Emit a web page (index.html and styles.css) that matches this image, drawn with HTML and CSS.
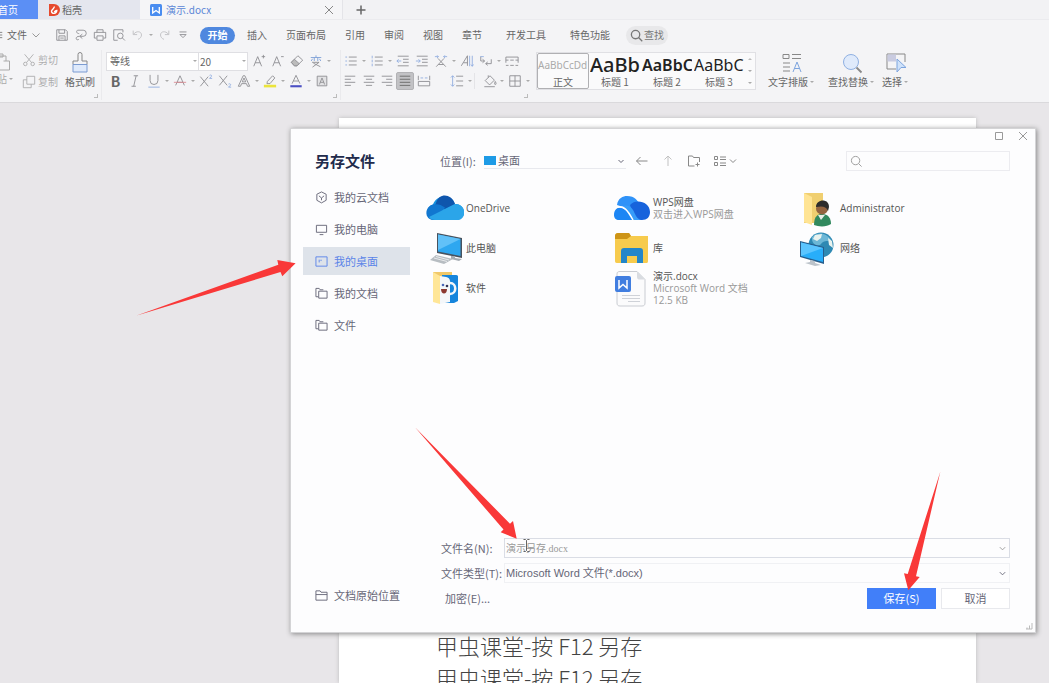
FILE: index.html
```html
<!DOCTYPE html>
<html lang="zh-CN">
<head>
<meta charset="utf-8">
<title>演示.docx</title>
<link rel="stylesheet" href="styles.css">
</head>
<body>
<header class="app-head">
  <nav class="tabs">
    <button class="tab tab-home"><span>首页</span></button>
    <button class="tab tab-shell">
      <svg class="i12" viewBox="0 0 12 12"><path d="M1 0h5a6 6 0 0 1 0 12H1z" fill="#e6492d"/><path d="M6.200 2.500c.5 2-2 2.500-2.700 4.500 0 3.500 5 3 5.300-.5-1 .2-1.800.7-2.600 1.500" fill="none" stroke="#fff" stroke-width="1.400"/></svg>
      稻壳</button>
    <button class="tab tab-doc">
      <svg class="i12" viewBox="0 0 12 12"><rect width="12" height="12" rx="1.500" fill="#4a8df0"/><path d="M2.700 3v6L6 6.500 9.300 9V3" fill="none" stroke="#fff" stroke-width="1.300"/></svg>
      <span>演示.docx</span>
      <svg class="i12 tab-close" viewBox="0 0 12 12"><path d="M2 2l8 8M10 2l-8 8"/></svg>
    </button>
    <button class="tab tab-add" aria-label="新建"><svg class="i12" viewBox="0 0 12 12"><path d="M6 1.500v9M1.500 6h9" stroke-width="1.500"/></svg></button>
  </nav>

  <nav class="menu">
    <button class="file-btn">
      <svg class="burger" viewBox="0 0 4 10"><path d="M0 1.500h3M0 5h3M0 8.500h3"/></svg>
      文件
      <svg class="i10" viewBox="0 0 10 10"><path d="M1.500 3.500L5 7l3.500-3.500"/></svg>
    </button>
    <div class="quick">
      <button class="cell" aria-label="保存"><svg viewBox="0 0 16 16"><path d="M2 2h10l2 2v10H2zM4.500 2v4h6.500V2M4.500 14V9h7v5M6 11.500h4"/></svg></button>
      <button class="cell" aria-label="输出"><svg viewBox="0 0 16 16"><path d="M4 2.500h6.500a3.500 3.500 0 0 1 0 7H7M9.500 7L6.500 9.500l3 2.500M4 2.500C2 4.500 3 6 6 6.500M6.500 9.500c-3 0-4 1-4 2.500s2 2 3 1"/></svg></button>
      <button class="cell" aria-label="打印"><svg viewBox="0 0 16 16"><path d="M4.500 5V2h7v3M4 11.500H1.500V5h13v6.500H12M4.500 9h7v5h-7z"/></svg></button>
      <button class="cell" aria-label="预览"><svg viewBox="0 0 16 16"><path d="M6.500 14H2V2h10.500v3"/><circle cx="9.500" cy="9" r="3.200"/><path d="M11.800 11.300l3 3"/></svg></button>
      <button class="cell faint" aria-label="撤销"><svg viewBox="0 0 16 16"><path d="M2.500 3v4.500H7M3 7c3-4 9-3.500 9 1 0 2-1.500 4-4 5"/></svg></button>
      <i class="caret"></i>
      <button class="cell faint" aria-label="恢复"><svg viewBox="0 0 16 16"><path d="M13.500 3v4.500H9M13 7C10 3 4 3.500 4 8c0 2 1.500 4 4 5"/></svg></button>
      <button class="cell" aria-label="自定义"><svg viewBox="0 0 16 16"><path d="M4 4.500h8M4.500 7.500L8 11l3.500-3.500z"/></svg></button>
    </div>
    <div class="menu-tabs">
      <button class="pill">开始</button>
      <button>插入</button><button>页面布局</button><button>引用</button><button>审阅</button><button>视图</button><button>章节</button>
      <button class="wide">开发工具</button><button class="wide">特色功能</button>
    </div>
    <button class="find"><svg viewBox="0 0 14 14"><circle cx="6" cy="6" r="4.500"/><path d="M9.200 9.200l4 4"/></svg>查找</button>
  </nav>

  <section class="ribbon">
    <div class="group clip-group">
      <button class="paste" aria-label="粘贴"><svg viewBox="0 0 12 20"><path d="M0 4h6v5M0 2h3v3H0M3.500 9h6v9H0" /></svg><span class="paste-row"><span>粘贴</span><i class="caret"></i></span></button>
      <div class="stack faint">
        <button class="label-btn"><svg viewBox="0 0 16 16"><path d="M3 1.500l8 9.500M13 1.500L5 11"/><circle cx="3.800" cy="12.500" r="2"/><circle cx="12.200" cy="12.500" r="2"/></svg>剪切</button>
        <button class="label-btn"><svg viewBox="0 0 16 16"><path d="M5.500 1.500h9v9h-9zM5.500 5.500h-4v9h9v-4"/></svg>复制</button>
      </div>
      <button class="big brush"><svg viewBox="0 0 22 22"><path d="M4 12.500V9h5V2.500a2 2 0 0 1 4 0V9h5v3.500"/><path d="M4 12.500h14V20H4z" fill="#dfeafb" stroke="#7b9bd1"/></svg><span>格式刷</span></button>
      <i class="corner"></i>
    </div>

    <div class="group font-group">
      <div class="line">
        <div class="combo"><input class="font-name" aria-label="字体" value="等线"><i class="caret"></i><input class="font-size" aria-label="字号" value="20"><i class="caret"></i></div>
        <button class="cell" aria-label="增大字号"><svg viewBox="0 0 16 16"><path d="M2 14L6.500 3 11 14M3.700 10h5.600M11 3h4M13 1v4"/></svg></button>
        <button class="cell" aria-label="减小字号"><svg viewBox="0 0 16 16"><path d="M2 14L6.500 3 11 14M3.700 10h5.600M11.500 3h3"/></svg></button>
        <button class="cell" aria-label="清除格式"><svg viewBox="0 0 16 16"><path d="M1.500 9.500L9 2l5.500 5L8 13.500H5z"/><path d="M5 6l5.500 5L8 13.500H5L1.500 9.500z" fill="#bbb"/></svg></button>
        <button class="cell" aria-label="拼音"><svg viewBox="0 0 16 16"><path d="M2 4h12M8 1.500V4M6 4v4M10 4v4M4 5.500L2.500 8M12 5.500L13.500 8" stroke="#7d9fd6"/><path d="M3.500 9.500h8L4 15M5 10.500l8 4"/></svg></button>
        <i class="caret"></i>
      </div>
      <div class="line">
        <button class="cell glyph bold">B</button>
        <button class="cell" aria-label="倾斜"><svg viewBox="0 0 16 16"><path d="M6.500 2h5M4 14h5M9.300 2L6.500 14"/></svg></button>
        <button class="cell" aria-label="下划线"><svg viewBox="0 0 16 16"><path d="M3.500 1v6.500a4.500 4.500 0 0 0 9 0V1"/><path d="M1.500 15h13" class="blue"/></svg></button><i class="caret"></i>
        <button class="cell" aria-label="删除线"><svg viewBox="0 0 16 16"><path d="M3 13L8 2l5 11M4.500 9.500h7"/><path d="M1 9.500h14" stroke="#dc8b92"/></svg></button><i class="caret"></i>
        <button class="cell" aria-label="上标"><svg viewBox="0 0 16 16"><path d="M1.500 3l9 11M10.500 3l-9 11"/><path d="M12 1.500c2-1 3 .5 2 1.500l-2 2h3" class="blue"/></svg></button>
        <button class="cell" aria-label="下标"><svg viewBox="0 0 16 16"><path d="M1.500 2l9 11M10.500 2l-9 11"/><path d="M12 11.500c2-1 3 .5 2 1.500l-2 2h3" class="blue"/></svg></button>
        <button class="cell" aria-label="文字效果"><svg viewBox="0 0 16 16"><path d="M1.500 14L7 2h2l5.500 12H12l-1.200-3H5.200L4 14zM6 9h4L8 4.500z"/></svg></button><i class="caret"></i>
        <button class="cell" aria-label="突出显示"><svg viewBox="0 0 16 16"><path d="M5 8.500L11 2l2.500 2.500L8 11H4.500z"/><path d="M1 13.800h14" stroke="#ebe43c" stroke-width="3"/></svg></button><i class="caret"></i>
        <button class="cell" aria-label="字体颜色"><svg viewBox="0 0 16 16"><path d="M3.500 11L8 1.500l4.500 9.500M5 8h6"/><path d="M1.500 14h13" stroke="#4b4fc4" stroke-width="2.400"/></svg></button><i class="caret"></i>
        <button class="cell" aria-label="字符底纹"><svg viewBox="0 0 16 16"><path d="M2.500 2.500h11v11h-11z" fill="#e2e2e4"/><path d="M5 12L8 4.500l3 7.500M6 9.500h4"/></svg></button>
      </div>
      <i class="corner"></i>
    </div>

    <div class="group para-group">
      <div class="line">
        <button class="cell" aria-label="项目符号"><svg viewBox="0 0 16 16"><path d="M5.500 3.500h9M5.500 8h9M5.500 12.500h9"/><path d="M1.500 3.500h2M1.500 8h2M1.500 12.500h2" class="blue"/></svg></button><i class="caret"></i>
        <button class="cell" aria-label="编号"><svg viewBox="0 0 16 16"><path d="M5.500 3.500h9M5.500 8h9M5.500 12.500h9"/><path d="M2.500 2v3M2.500 6.500v3M2.500 11v3" class="blue"/></svg></button><i class="caret"></i>
        <button class="cell" aria-label="减少缩进"><svg viewBox="0 0 16 16"><path d="M2 2.500h12.500M8 6h6.500M8 9.500h6.500M2 13.500h12.500"/><path d="M1 8h5M3 6L1 8l2 2" class="blue"/></svg></button>
        <button class="cell" aria-label="增加缩进"><svg viewBox="0 0 16 16"><path d="M2 2.500h12.500M8 6h6.500M8 9.500h6.500M2 13.500h12.500"/><path d="M1 8h5M4 6l2 2-2 2" class="blue"/></svg></button>
        <button class="cell" aria-label="中文版式"><svg viewBox="0 0 16 16"><path d="M2.500 14.500L11.500 5M13.500 14.500L4.500 5M5 12h6"/><path d="M1 3h4M11 3h4M3.500 1.500L5 3 3.500 4.500M12.500 1.500L11 3l1.500 1.500" class="blue"/></svg></button><i class="caret"></i>
        <button class="cell" aria-label="排序"><svg viewBox="0 0 16 16"><path d="M1.500 13.500L8.500 2v11.500M4 10h4.500"/><path d="M11 2v12M14 2v12M12.500 12l1.500 2 1.500-2" class="blue"/></svg></button>
        <button class="cell" aria-label="换行"><svg viewBox="0 0 16 16"><path d="M2 3v5h4M4 6l2.500 2L4 10M14 6v5H8M10 9l-2.500 2 2.500 2"/><path d="M1.500 3h4" class="blue"/></svg></button><i class="caret"></i>
        <button class="cell" aria-label="制表位"><svg viewBox="0 0 16 16"><path d="M1 10V3.500h14V10M1 7h3M6 7h4M12 7h3M1 13h3M6 13h4M12 13h3"/></svg></button>
      </div>
      <div class="line">
        <button class="cell" aria-label="左对齐"><svg viewBox="0 0 16 16"><path d="M2 2.500h12M2 6h7M2 9.500h12M2 13h7"/></svg></button>
        <button class="cell" aria-label="居中"><svg viewBox="0 0 16 16"><path d="M2 2.500h12M4.500 6h7M2 9.500h12M4.500 13h7"/></svg></button>
        <button class="cell" aria-label="右对齐"><svg viewBox="0 0 16 16"><path d="M2 2.500h12M7 6h7M2 9.500h12M7 13h7"/></svg></button>
        <button class="cell active" aria-label="两端对齐"><svg viewBox="0 0 16 16"><path d="M2 2.500h12M2 6h12M2 9.500h12M2 13h12"/></svg></button>
        <button class="cell" aria-label="分散对齐"><svg viewBox="0 0 16 16"><path d="M1.500 2v5M14.500 2v5M1.500 8.500h13v5h-13z"/><path d="M4 4.500h3M9 4.500h3" class="blue"/></svg></button>
        <i class="gap"></i>
        <button class="cell" aria-label="行距"><svg viewBox="0 0 16 16"><path d="M7 2.500h8M7 8h8M7 13.500h8"/><path d="M3 2v12M1 4l2-2 2 2M1 12l2 2 2-2" class="blue"/></svg></button><i class="caret"></i>
        <i class="rule"></i>
        <button class="cell" aria-label="底纹"><svg viewBox="0 0 16 16"><path d="M2.500 7.500L8 2l5 5-5.500 5.500zM6 4V1.500M14 8.500c1.500 2.500 1 3.500 0 3.500s-1-1.500 0-3.500M1.500 14.500h12"/></svg></button><i class="caret"></i>
        <button class="cell" aria-label="边框"><svg viewBox="0 0 16 16"><path d="M2 2h12v12H2zM8 2v12M2 8h12"/></svg></button><i class="caret"></i>
      </div>
      <i class="corner"></i>
    </div>

    <div class="styles">
      <button class="style on"><span class="sample s0">AaBbCcDd</span><span>正文</span></button>
      <button class="style"><span class="sample s1">AaBb</span><span>标题 1</span></button>
      <button class="style"><span class="sample s2">AaBbC</span><span>标题 2</span></button>
      <button class="style"><span class="sample s3">AaBbC</span><span>标题 3</span></button>
      <div class="style-scroll"><i class="caret up"></i><i class="caret"></i><i class="caret"></i></div>
    </div>

    <button class="big layout-btn"><svg viewBox="0 0 22 22"><path d="M2 2.500h6v4H2zM11 2.500h9M11 6.500h9M2 11h7M2 15h7M2 19h7"/><path d="M12 20l4-10 4 10M13.500 16.500h5" stroke="#7da4de"/></svg><span>文字排版<i class="caret"></i></span></button>
    <button class="big"><svg viewBox="0 0 22 22"><circle cx="10" cy="10" r="7.500" fill="#dfeafb" stroke="#8fb0e2"/><path d="M15.500 15.500L20.500 20.500" stroke-width="1.800"/></svg><span>查找替换<i class="caret"></i></span></button>
    <button class="big select-btn"><svg viewBox="0 0 22 22"><path d="M11 17H2V2h18v8"/><path d="M2.500 2.500h8.500v7h-8.500z" fill="#c9cbe0" stroke="none"/><path d="M12 7v13l4-4.500h5z" fill="#cfe2fa" stroke="#7da4de"/></svg><span>选择<i class="caret"></i></span></button>
  </section>
</header>

<main class="workspace">
  <article class="paper">
    <p>甲虫课堂-按 F12 另存</p>
    <p>甲虫课堂-按 F12 另存</p>
  </article>

  <section class="dialog" role="dialog" aria-label="另存文件">
    <div class="titlebar">
      <button aria-label="最大化"><svg viewBox="0 0 10 10"><path d="M1.500 1.500h7v7h-7z"/></svg></button>
      <button aria-label="关闭"><svg viewBox="0 0 10 10"><path d="M1 1l8 8M9 1L1 9"/></svg></button>
    </div>

    <aside class="side">
      <h1>另存文件</h1>
      <button><svg viewBox="0 0 14 14"><path d="M7 1l5 2.500v6.500L7 12.800 2 10V3.500z"/><path d="M4.200 5.200L7 7.500l2.800-2.300M7 7.500v2.500"/></svg>我的云文档</button>
      <button><svg viewBox="0 0 14 14"><path d="M1.500 2.500h11v7.500h-11zM5 12.500h4"/></svg>我的电脑</button>
      <button class="current"><svg viewBox="0 0 14 14"><path d="M1 2h12v10H1zM4.500 5v3M6.500 5v1.500"/></svg>我的桌面</button>
      <button><svg viewBox="0 0 14 14"><path d="M3.500 10.500H1v-9h3.500l1 1.500H9M4 4.500h9v7.500H4z"/></svg>我的文档</button>
      <button><svg viewBox="0 0 14 14"><path d="M3.500 10.500H1v-9h3.500l1 1.500H9M4 4.500h9v7.500H4z"/></svg>文件</button>
      <button class="origin"><svg viewBox="0 0 14 14"><path d="M1 12V2h4.500l1 1.500H13V12zM1 6h12"/></svg>文档原始位置</button>
    </aside>

    <div class="main">
      <div class="location">
        <label for="loc">位置(I):</label>
        <div class="loc-field"><i class="desk"></i><select id="loc"><option>桌面</option></select><svg viewBox="0 0 10 10"><path d="M2.500 4L5 6.500 7.500 4"/></svg></div>
        <button aria-label="后退"><svg viewBox="0 0 14 14"><path d="M12.500 7h-11M5.500 3L1.500 7l4 4"/></svg></button>
        <button class="faint" aria-label="上一级"><svg viewBox="0 0 14 14"><path d="M7 12V2M3.500 5.500L7 2l3.500 3.500"/></svg></button>
        <button aria-label="新建文件夹"><svg viewBox="0 0 14 14"><path d="M7.500 12h-6V2h4l1 1.500h6V8M10.500 8.500v4M8.500 10.500h4"/></svg></button>
        <button class="view-btn" aria-label="视图"><svg viewBox="0 0 24 14"><path d="M1.500 2.500h3v3h-3zM1.500 8.500h3v3h-3zM7 3h6M7 5.500h6M7 9h6M7 11.500h6M17 5.500L20 8.500l3-3"/></svg></button>
        <label class="search"><svg viewBox="0 0 14 14"><circle cx="6" cy="6" r="4.500"/><path d="M9.300 9.300l3.200 3.200"/></svg><input type="search" aria-label="搜索"></label>
      </div>

      <ul class="files">
        <li><svg class="pic" viewBox="0 0 38 38"><path d="M8 31a8 8 0 0 1-1-15.500C9 9 19 3 27 11l2 4a8 8 0 0 1 2 16z" fill="#1490df"/><path d="M10 14C13 4 25 4 29 15l-10 5-10-4z" fill="#0f56ad"/><path d="M7 15.500c4-1 8 0 12 3L8 31c-10 0-10-13-1-15.500z" fill="#1177d0"/><path d="M19 20l10-5c12 0 12 16 2 16H9c-3 0-5-1-6-3z" fill="#2ba5e9"/></svg><p>OneDrive</p></li>
        <li><svg class="pic" viewBox="0 0 38 38"><path d="M4 16C5 9 10 7 14 7c8 0 11 5 13 9l-4 14-7-10z" fill="#2f92f8"/><path d="M17 16c6-7 20-3 20 7 0 5-3 8-8 8H18c4-3 0-12-1-15z" fill="#1763dc"/><path d="M10 17c7-2 10 3 12 8 2 4 4 6 8 6H16c-4-4-2-10-6-14z" fill="#379cf9"/><path d="M1 26c0-9 9-10 13-3l5 8H6c-3 0-5-2-5-5z" fill="#1d86f4"/><path d="M2 19c9-4 13 3 18 12" fill="none" stroke="#fff" stroke-width="1.500"/></svg><div><p>WPS网盘</p><p class="sub">双击进入WPS网盘</p></div></li>
        <li><svg class="pic" viewBox="0 0 38 38"><path d="M4 4h19v30H4z" fill="#f0cf70"/><path d="M4 4l8 4v28l-8-3z" fill="#ffe494"/><path d="M14 36c0-9 4-11 8-11 6 0 9 4 9 10-4 3-12 3-17 1z" fill="#31895e"/><path d="M18 26l3 5 4-5z" fill="#e8eee8"/><circle cx="22" cy="19.500" r="6" fill="#936440"/><path d="M16 18c0-8 13-9 13 0l-1 4c-2-5-6-5-12-4z" fill="#2c2c2c"/></svg><p>Administrator</p></li>
        <li><svg class="pic" viewBox="0 0 38 38"><path d="M11 4l25 5v20l-25-5z" fill="#48525e"/><path d="M12 5.500l22.500 4.500v17L12 22.500z" fill="#2ea7f0"/><path d="M12 5.500l22.500 4.500L12 21z" fill="#61c1f8"/><path d="M25 27v3l8 2 3-2-7-1v-2z" fill="#a5acb3"/><path d="M10 26l17 4-9 5-14-4z" fill="#b7bdc2"/><path d="M8 29l13 3.500M10 27.500l13 3.500" stroke="#e8eaec" stroke-width="1"/></svg><p>此电脑</p></li>
        <li><svg class="pic" viewBox="0 0 38 38"><path d="M2 8c0-3 1-4 3-4h11l2 3h17v25c0 2-1 2-2 2H4c-2 0-2-1-2-3z" fill="#f7cb4d"/><path d="M2 10h12l4-3-2-3H5C3 4 2 5 2 7z" fill="#cd9417"/><path d="M8 34V22c0-2 1-3 3-3h16c2 0 3 1 3 3v12h-6v-7H14v7z" fill="#2386c9"/></svg><p>库</p></li>
        <li><svg class="pic" viewBox="0 0 38 38"><circle cx="21" cy="16" r="12.500" fill="#2e89b3"/><path d="M12 8c6-6 15-4 19 3-5 2-7 0-10 4-4 4-10-1-9-7z" fill="#6cb7d6"/><path d="M15 6l7-1-1 4-4 3-4-2zM28 9l4 3 1 7-4-3z" fill="#e9f2ee"/><path d="M0 12l24 6v17L0 28z" fill="#285e8c"/><path d="M1 13.500L23 19v14L1 27z" fill="#28aefa"/><path d="M1 13.500L23 19 1 27z" fill="#5bc5ff"/><path d="M10 31v2l-5 1 10 3 6-1-6-2v-2z" fill="#bcc3ca"/></svg><p>网络</p></li>
        <li><svg class="pic" viewBox="0 0 38 38"><path d="M7 3h19v30H7z" fill="#f0c869"/><path d="M16 6h14c2 0 2 1 2 2v24l-4 2H16z" fill="#1685dc"/><path d="M7 3l7 4v28l-7-2z" fill="#ffe697"/><path d="M14 7c3 1 10 0 10 5v21l-10 2z" fill="#f4f7fa"/><path d="M24 14c7 0 7 11 0 11" fill="none" stroke="#f4f7fa" stroke-width="2.500"/><circle cx="17" cy="16" r="1.300" fill="#4a66b8"/><circle cx="21" cy="17" r="1.300" fill="#335"/><path d="M15 20h6c0 6-6 6-6 0z" fill="#8c3931"/></svg><p>软件</p></li>
        <li><svg class="pic" viewBox="0 0 38 38"><path d="M4 5c0-2 1-2.500 3-2.500h17l8 8V34c0 2-1 3-3 3H7c-2 0-3-1-3-3z" fill="#fbfbfc" stroke="#c9ccd2"/><path d="M24 2.500V8c0 2 1 2.500 3 2.500h5z" fill="#d9dce1"/><path d="M9 26.500h18M9 29.500h18M15 32.500h12" stroke="#cfd2d8"/><rect x="2" y="7" width="16" height="16" rx="2" fill="#417ee0"/><path d="M6 11v8l4-3.500 4 3.500v-8" fill="none" stroke="#fff" stroke-width="1.500"/></svg><div><p>演示.docx</p><p class="sub">Microsoft Word 文档</p><p class="sub">12.5 KB</p></div></li>
      </ul>

      <form class="form" onsubmit="return false">
        <label for="fname">文件名(N):</label>
        <div class="field name-field"><input id="fname" value="演示另存.docx"><svg viewBox="0 0 10 10"><path d="M2 3.500l3 3 3-3"/></svg></div>
        <label for="ftype">文件类型(T):</label>
        <div class="field"><select id="ftype"><option>Microsoft Word 文件(*.docx)</option></select><svg viewBox="0 0 10 10"><path d="M2 3.500l3 3 3-3"/></svg></div>
        <div class="actions"><button class="encrypt">加密(E)...</button><button class="save">保存(S)</button><button class="cancel">取消</button></div>
      </form>
    </div>
    <svg class="grip" viewBox="0 0 8 8"><path d="M7 1v6M4.500 3.500V7M2 5.500V7M1 7h6"/></svg>
  </section>
</main>

<svg class="marks" viewBox="0 0 1049 683" aria-hidden="true">
  <path d="M136 315.700L278.300 264.700 277.300 260 295.600 263.300 282.300 276.300 280.500 272z"/>
  <path d="M415 427.300L510 523.700 513 521 516.700 538.700 500.700 532.300 503.500 529.500z"/>
  <path d="M940.300 471.700L916 576.300 919.700 577 908.300 590.300 904 573.300 907.700 574z"/>
  <path class="ibeam" d="M523.500 539.500h2l1 1 1-1h2M526.500 540.500v10M523.500 551.500h2l1-1 1 1h2"/>
</svg>
</body>
</html>
```
FILE: styles.css
```css
* { box-sizing: border-box; }
body {
  margin: 0;
  height: 100vh;
  display: flex;
  flex-direction: column;
  overflow: hidden;
  background: #e8e6e9;
  color: #666;
  font: 10px/12px "Noto Sans CJK SC", sans-serif;
}
button, input, select {
  font: inherit;
  color: inherit;
  background: none;
  border: 0;
  padding: 0;
  margin: 0;
  outline: 0;
  appearance: none;
  white-space: nowrap;
}
input, select { min-width: 0; }
svg { fill: none; stroke: currentColor; flex: none; display: block; }
.pic, .tab svg { stroke: none; }
p, h1, ul { margin: 0; padding: 0; }
.faint { opacity: .5; }
.blue { stroke: #8fabdf; }
.i12 { width: 12px; height: 12px; }
.i10 { width: 10px; height: 10px; }

.app-head { flex: none; background: #f4f4f6; border-bottom: 1px solid #dad9dc; }

/* document tabs */
.tabs { display: flex; height: 20px; background: #f2f2f4; border-bottom: 1px solid #ebebee; }
.tab { display: flex; align-items: center; gap: 2px; height: 19px; }
.tab-home { width: 38px; justify-content: flex-end; padding-right: 20px; background: #5b8ff5; color: #fff; overflow: hidden; }
.tab-shell { width: 102px; padding-left: 10px; background: #e4e6ee; }
.tab-doc { width: 203px; gap: 4px; padding: 0 7px 0 10px; background: #f5f5f7; color: #5b86d6; border-right: 1px solid #e4e4e8; }
.tab .tab-close { margin-left: auto; stroke: #888; }
.tab-add { padding-left: 12px; }
.tab-add svg.i12 { stroke: #666; }

/* menu row */
.menu { display: flex; align-items: center; height: 30px; }
.file-btn { display: flex; align-items: center; gap: 4px; width: 52px; }
.file-btn .i10 { color: #999; }
.burger { width: 3px; height: 10px; }
.quick { display: flex; align-items: center; width: 148px; }
.cell { width: 19px; height: 18px; display: flex; align-items: center; justify-content: center; color: #8c8c90; }
.cell svg { width: 14px; height: 14px; }
.caret { width: 7px; flex: none; display: flex; justify-content: center; }
.caret::before { content: ""; border: 2px solid transparent; border-top-color: #aaa; border-bottom: 0; }
.caret.up::before { border: 2px solid transparent; border-bottom-color: #bbb; border-top: 0; }
.menu-tabs { display: flex; align-items: center; gap: 19px; margin-right: 16px; }
.menu-tabs .wide { margin-left: 5px; }
.menu-tabs .pill { width: 35px; height: 17px; border-radius: 9px; background: #4f88df; color: #fff; font-weight: 700; margin-right: -7px; }
.find { display: flex; align-items: center; gap: 1px; height: 19px; padding: 0 4px; border-radius: 10px; background: #e8e8ea; color: #777; }
.find svg { width: 13px; height: 13px; stroke-width: 1.4; }

/* ribbon */
.ribbon { display: flex; height: 52px; align-items: flex-start; }
.group { position: relative; flex: none; height: 50px; border-right: 1px solid #eaeaed; }
.corner { position: absolute; right: 3px; bottom: 2px; width: 4px; height: 4px; border: solid #bbb; border-width: 0 1px 1px 0; }
.line { display: flex; align-items: center; height: 20px; }
.clip-group { display: flex; width: 102px; }
.paste { width: 16px; display: flex; flex-direction: column; gap: 1px; color: #aaa; overflow: hidden; padding-top: 2px; }
.paste svg { width: 12px; height: 20px; }
.paste-row { width: 14px; display: flex; justify-content: flex-end; align-items: center; }
.stack { width: 49px; padding-left: 6px; display: flex; flex-direction: column; gap: 2px; }
.label-btn { height: 20px; display: flex; align-items: center; gap: 2px; }
.label-btn svg { width: 14px; height: 14px; }
.big { flex: none; display: flex; flex-direction: column; align-items: center; gap: 2px; padding-top: 2px; }
.big svg { width: 22px; height: 22px; color: #888; }
.big span { display: flex; align-items: center; }
.font-group { width: 239px; padding: 1px 0 0 4px; }
.combo { display: flex; align-items: center; width: 142px; height: 19px; margin-right: 1px; background: #fff; border: 1px solid #dfdfe3; }
.font-name { flex: 1; padding-left: 3px; }
.font-size { width: 42px; height: 17px; padding-left: 1px; border-left: 1px solid #dfdfe3; }
.glyph { font-size: 14px; color: #666; }
.bold { font-weight: 700; }
.para-group { width: 190px; padding: 1px 0 0; border: 0; }
.active { background: #c2c2c5; border: 1px solid #b2b2b5; border-radius: 2px; color: #666; }
.gap { width: 16px; }
.rule { width: 7px; height: 16px; border-left: 1px solid #e4e4e7; }
.styles { flex: none; display: flex; width: 220px; height: 38px; margin: 2px 12px 0 5px; background: #fafafb; border: 1px solid #e0e0e4; }
.style { width: 52px; overflow: hidden; display: flex; flex-direction: column; align-items: center; padding: 1px; }
.style.on { border: 1px solid #b0b0b3; border-radius: 2px; padding: 0; }
.sample { height: 22px; width: 100%; line-height: 22px; text-align: left; color: #222; font-family: "Noto Sans", sans-serif; overflow: hidden; }
.s0 { color: #aaa; font-size: 10px; }
.s1 { font-size: 20px; font-weight: 500; }
.s2 { font-size: 16px; font-weight: 600; }
.s3 { font-size: 16px; }
.style-scroll { flex: 1; display: flex; flex-direction: column; align-items: center; justify-content: space-around; }
.layout-btn { margin-right: 13px; }
.select-btn { margin-left: 7px; }

/* document */
.workspace { flex: 1; min-height: 0; position: relative; display: flex; }
.paper {
  flex: 1;
  margin: 15px 73px 0 339px;
  padding: 511px 0 0 97px;
  overflow: hidden;
  background: #fff;
  box-shadow: 0 0 4px #bbb;
  color: #444;
  font-size: 22px;
  font-weight: 300;
  line-height: 32px;
}

/* save dialog */
.dialog {
  position: absolute;
  top: 25px;
  right: 13px;
  bottom: 50px;
  left: 290px;
  display: grid;
  grid-template: 16px 1fr / 134px 1fr;
  background: #fdfdfe;
  border: 1px solid #d4d4d6;
  box-shadow: 1px 1px 5px #888;
  font-size: 11px;
  line-height: 13px;
  color: #667;
}
.titlebar { grid-column: 1 / -1; display: flex; justify-content: flex-end; align-items: center; gap: 14px; padding: 0 7px 2px 0; color: #999; }
.titlebar svg { width: 10px; height: 10px; }
.side { padding: 0 15px 23px 12px; display: flex; flex-direction: column; gap: 4px; }
.side h1 { margin: 5px 0 7px 12px; font-size: 15px; line-height: 22px; color: #222b4c; font-weight: 700; }
.side button { height: 28px; padding-left: 12px; display: flex; align-items: center; gap: 6px; }
.side svg { width: 13px; height: 13px; }
.side .current { background: #dee3ea; color: #5b84e8; }
.side .origin { margin-top: auto; }
.main { min-width: 0; padding: 6px 25px 23px 0; display: flex; flex-direction: column; }
.location { display: flex; align-items: center; height: 20px; padding-left: 15px; }
.location > button { width: 26px; display: flex; justify-content: center; color: #888; }
.location > button svg { width: 14px; height: 14px; }
.location .view-btn svg { width: 24px; }
.location .view-btn { width: 36px; }
.loc-field { width: 142px; height: 16px; margin: 0 3px 0 2px; display: flex; align-items: center; gap: 2px; border-bottom: 1px solid #e8e9ee; }
.location label:first-child { width: 42px; }
.loc-field select { flex: 1; }
.loc-field svg { width: 10px; height: 10px; }
.desk { width: 12px; height: 9px; background: #1e9be6; }
.search { width: 164px; height: 20px; margin-left: auto; padding-left: 3px; display: flex; align-items: center; border: 1px solid #ececf0; color: #999; }
.search svg { width: 13px; height: 13px; }
.search input { flex: 1; }
.files { flex: 1; list-style: none; display: grid; grid-template-columns: repeat(3, 187px); grid-auto-rows: 40px; padding: 17px 0 0 1px; align-content: start; font-family: "Open Sans", "Noto Sans CJK SC", sans-serif; font-size: 10px; line-height: 12px; color: #555; }
.files li { display: flex; align-items: center; gap: 2px; white-space: nowrap; }
.pic { width: 38px; height: 38px; }
.sub { color: #999; }
.form { display: grid; grid-template-columns: 63px 1fr; align-items: center; row-gap: 5px; padding-left: 16px; white-space: nowrap; }
.field { display: flex; align-items: center; height: 20px; padding-right: 2px; border: 1px solid #f0f1f4; font-family: "Liberation Sans", "Noto Sans CJK SC", sans-serif; }
.name-field { border-color: #dadde5; font-family: "Liberation Serif", "Noto Sans CJK SC", serif; font-size: 10px; color: #999; }
.field input, .field select { flex: 1; padding-left: 1px; }
.field svg { width: 9px; height: 9px; }
.actions { grid-column: 1 / -1; display: flex; gap: 5px; height: 21px; }
.encrypt { margin: 0 auto 0 4px; }
.save, .cancel { width: 69px; border: 1px solid #e8e9ed; background: #fff; }
.save { background: #417ff9; border-color: #417ff9; color: #fff; }
.grip { position: absolute; right: 2px; bottom: 2px; width: 8px; height: 8px; color: #bbb; }

/* pointers drawn over the window */
.marks { position: absolute; top: 0; left: 0; width: 1049px; height: 683px; pointer-events: none; fill: #f93838; stroke: none; }
.ibeam { fill: none; stroke: #666; }
```
